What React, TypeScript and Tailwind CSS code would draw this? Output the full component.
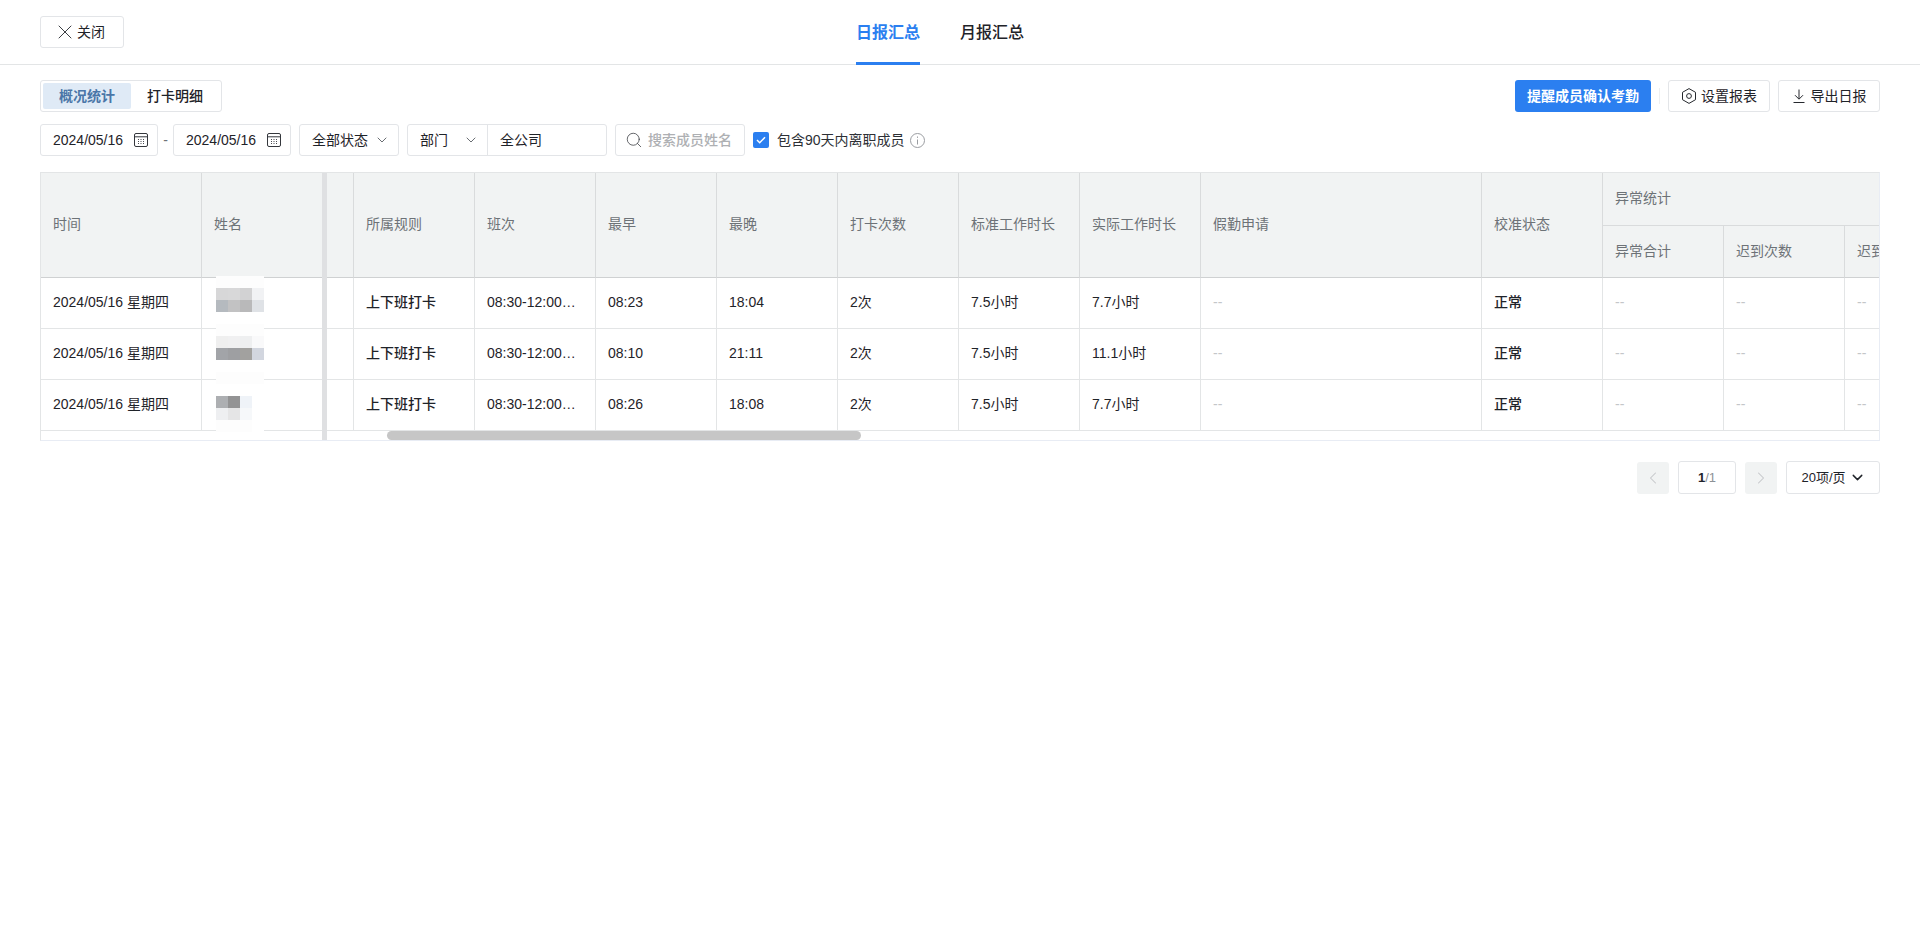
import { ChevronDown, ChevronLeft, ChevronRight, Search, X } from "lucide-react";

const FONT = "font-['Liberation_Sans','Noto_Sans_CJK_SC',sans-serif]";
const box = "flex h-8 items-center rounded-[3px] border border-[#e3e5e8] bg-white";

function CalendarIcon() {
  return (
    <svg width="16" height="16" viewBox="0 0 16 16" fill="none" stroke="#34373c" strokeWidth="1">
      <rect x="1.5" y="1.5" width="13" height="13" rx="1.5" />
      <path d="M1.5 4.8h13" />
      <path d="M5 7.5h1M7.5 7.5h1M10 7.5h1M5 9.5h1M7.5 9.5h1M10 9.5h1M5 11.5h1M7.5 11.5h1M10 11.5h1" strokeWidth="0.9" />
    </svg>
  );
}

function HexIcon() {
  return (
    <svg width="16" height="16" viewBox="0 0 16 16" fill="none" stroke="#26292e" strokeWidth="1">
      <path d="M8 .6l6.5 3.7v7.4L8 15.4l-6.5-3.7V4.3z" />
      <circle cx="8" cy="8" r="2.4" />
    </svg>
  );
}

function DownloadIcon() {
  return (
    <svg width="14" height="14" viewBox="0 0 14 14" fill="none" stroke="#26292e" strokeWidth="1">
      <path d="M7 .5v9.5M3 6.2L7 10.2l4-4M1.5 13.5h11" />
    </svg>
  );
}

function InfoIcon() {
  return (
    <svg width="15" height="15" viewBox="0 0 15 15" fill="none" stroke="#9a9da1" strokeWidth="1">
      <circle cx="7.5" cy="7.5" r="7" />
      <path d="M7.5 6.5v5M7.5 3.5v1.4" />
    </svg>
  );
}

function DateInput() {
  return (
    <div className={`${box} w-[118px] justify-between pl-3 pr-2 text-sm text-[#1f2329]`}>
      <span>2024/05/16</span>
      <CalendarIcon />
    </div>
  );
}

// name cells are pixelated in the screenshot
const mosaics = [
  {
    top: "top-[-2px]",
    rows: [
      ["bg-[#fdfdfd]", "bg-[#fdfdfd]", "bg-[#fdfdfd]", "bg-[#fdfdfd]"],
      ["bg-[#d7d7d8]", "bg-[#d8d8d9]", "bg-[#d2d2d3]", "bg-[#f1f2f4]"],
      ["bg-[#b5babf]", "bg-[#c2c2c3]", "bg-[#b9b9ba]", "bg-[#dfe2e6]"],
    ],
  },
  {
    top: "top-[-5px]",
    rows: [
      ["bg-[#fdfdfd]", "bg-[#fdfdfd]", "bg-[#fdfdfd]", "bg-[#fdfdfd]"],
      ["bg-[#efefef]", "bg-[#f0f0f1]", "bg-[#eeeff0]", "bg-[#f9f9fa]"],
      ["bg-[#a2a4a8]", "bg-[#9e9fa2]", "bg-[#a2a19f]", "bg-[#d2d6df]"],
    ],
  },
  {
    top: "top-[-8px]",
    rows: [
      ["bg-[#fdfdfd]", "bg-[#fdfdfd]", "bg-[#fdfdfd]", "bg-[#fdfdfd]"],
      ["bg-white", "bg-white", "bg-white", "bg-white"],
      ["bg-[#adafb2]", "bg-[#939394]", "bg-[#eff3f8]", "bg-white"],
      ["bg-[#eeeff1]", "bg-[#e5e5e6]", "bg-[#f6f8fa]", "bg-white"],
      ["bg-[#fdfdfd]", "bg-[#fdfdfd]", "bg-[#fdfdfd]", "bg-white"],
    ],
  },
];

const rows = [
  { late: "18:04", early: "08:23", real: "7.7小时" },
  { late: "21:11", early: "08:10", real: "11.1小时" },
  { late: "18:08", early: "08:26", real: "7.7小时" },
];

const headCell = "overflow-hidden whitespace-nowrap border-r border-b border-[#d9dbdc] bg-[#f1f3f3] px-3 pb-[2px] text-left text-sm font-normal text-[#6d7277]";
const bodyCell = "h-[51px] truncate border-r border-b border-[#e3e5e6] bg-white px-3 pb-[2px] text-sm text-[#1f2329]";
const emptyCell = "h-[51px] border-r border-b border-[#e3e5e6] bg-white px-3 pb-[2px] text-sm text-[#c4c6c9]";

function ReportTable() {
  return (
    <div className="relative mx-10 mt-4 w-[1840px] overflow-hidden border-t border-r border-b border-l border-t-[#e3e5e6] border-r-[#e8ecf4] border-b-[#e8ecf4] border-l-[#e3e5e6] pb-[9px]">
      <table className="w-[1925px] table-fixed border-separate border-spacing-0">
        <colgroup>
          <col className="w-[161px]" />
          <col className="w-[152px]" />
          <col className="w-[121px]" />
          <col className="w-[121px]" />
          <col className="w-[121px]" />
          <col className="w-[121px]" />
          <col className="w-[121px]" />
          <col className="w-[121px]" />
          <col className="w-[121px]" />
          <col className="w-[281px]" />
          <col className="w-[121px]" />
          <col className="w-[121px]" />
          <col className="w-[121px]" />
          <col className="w-[121px]" />
        </colgroup>
        <thead>
          <tr className="h-[53px]">
            {["时间", "姓名", "所属规则", "班次", "最早", "最晚", "打卡次数", "标准工作时长", "实际工作时长", "假勤申请", "校准状态"].map((t) => (
              <th key={t} rowSpan={2} className={`${headCell} border-b-[#cfd1d2]`}>
                {t}
              </th>
            ))}
            <th colSpan={3} className={headCell}>
              异常统计
            </th>
          </tr>
          <tr className="h-[52px]">
            <th className={`${headCell} border-b-[#cfd1d2]`}>异常合计</th>
            <th className={`${headCell} border-b-[#cfd1d2]`}>迟到次数</th>
            <th className={`${headCell} border-b-[#cfd1d2]`}>迟到时长</th>
          </tr>
        </thead>
        <tbody>
          {rows.map((r, i) => (
            <tr key={i}>
              <td className={bodyCell}>2024/05/16 星期四</td>
              <td className={`${bodyCell} relative overflow-visible`}>
                <div className={`absolute left-[14px] z-10 ${mosaics[i].top}`}>
                  {mosaics[i].rows.map((line, j) => (
                    <div key={j} className="flex">
                      {line.map((c, k) => (
                        <div key={k} className={`h-3 w-3 ${c}`} />
                      ))}
                    </div>
                  ))}
                </div>
              </td>
              <td className={`${bodyCell} font-medium`}>上下班打卡</td>
              <td className={`${bodyCell} pr-4`}>08:30-12:00 13:30-18:00</td>
              <td className={bodyCell}>{r.early}</td>
              <td className={bodyCell}>{r.late}</td>
              <td className={bodyCell}>2次</td>
              <td className={bodyCell}>7.5小时</td>
              <td className={bodyCell}>{r.real}</td>
              <td className={emptyCell}>--</td>
              <td className={`${bodyCell} font-medium`}>正常</td>
              <td className={emptyCell}>--</td>
              <td className={emptyCell}>--</td>
              <td className={emptyCell}>--</td>
            </tr>
          ))}
        </tbody>
      </table>
      {/* end of the frozen columns */}
      <div className="absolute top-0 bottom-0 left-[281px] z-20 w-[5px] bg-[#dfe0e2]" />
      {/* horizontal scrollbar */}
      <div className="absolute bottom-0 left-[346px] z-20 h-[9px] w-[474px] rounded-full bg-[#c6c6c6]" />
    </div>
  );
}

export default function App() {
  return (
    <div className={`min-h-[931px] bg-white ${FONT}`}>
      <header className="flex h-[65px] items-start border-b border-[#e3e5e6] px-10">
        <button className={`${box} mt-4 w-[84px] pl-[12px] text-sm text-[#1f2329]`}>
          <X size={24} strokeWidth={1} className="text-[#3a3d42]" />
          关闭
        </button>
        <nav className="ml-[732px] flex h-16 gap-10 pt-[2px] text-base">
          <div className="relative flex items-center font-bold text-[#2b7ff0]">
            日报汇总
            <span className="absolute right-0 -bottom-px left-0 h-[3px] bg-[#2b7ff0]" />
          </div>
          <div className="flex items-center font-medium text-[#1f2329]">月报汇总</div>
        </nav>
      </header>

      <div className="mt-[15px] flex items-start justify-between px-10">
        <div className={`${box} w-[182px] gap-0 px-[2px] text-sm`}>
          <div className="flex h-[26px] w-[88px] items-center justify-center rounded-[2px] bg-[#dfeaf6] font-bold text-[#4a76a8]">
            概况统计
          </div>
          <div className="flex flex-1 items-center justify-center font-medium text-[#1f2329]">打卡明细</div>
        </div>
        <div className="flex items-center text-sm">
          <button className="h-8 w-[136px] rounded-[3px] bg-[#2b7ff0] font-bold text-white">提醒成员确认考勤</button>
          <span className="mx-2 h-4 w-px bg-[#eeeff0]" />
          <button className={`${box} w-[102px] justify-center gap-1 text-[#1f2329]`}>
            <HexIcon />
            设置报表
          </button>
          <button className={`${box} ml-2 w-[102px] justify-center gap-[5px] text-[#1f2329]`}>
            <DownloadIcon />
            导出日报
          </button>
        </div>
      </div>

      <div className="mt-3 flex items-center px-10 text-sm text-[#1f2329]">
        <DateInput />
        <span className="w-[15px] text-center text-[#6d7277]">-</span>
        <DateInput />
        <div className={`${box} ml-2 w-[100px] justify-between pl-3 pr-2`}>
          <span>全部状态</span>
          <ChevronDown size={16} strokeWidth={1.25} className="text-[#4b4f55]" />
        </div>
        <div className={`${box} ml-2 w-[200px]`}>
          <div className="flex h-full w-[80px] items-center justify-between border-r border-[#e3e5e8] pl-3 pr-2">
            <span>部门</span>
            <ChevronDown size={16} strokeWidth={1.25} className="text-[#4b4f55]" />
          </div>
          <span className="pl-3">全公司</span>
        </div>
        <div className={`${box} ml-2 w-[130px] gap-[5px] pl-[9px] font-medium text-[#aeb0b3]`}>
          <Search size={18} strokeWidth={1} className="text-[#34373c]" />
          搜索成员姓名
        </div>
        <div className="ml-2 flex h-4 w-4 items-center justify-center rounded-[2px] bg-[#2b7ff0]">
          <svg width="10" height="8" viewBox="0 0 10 8" fill="none" stroke="white" strokeWidth="1.5">
            <path d="M1 4l2.7 2.7L9 1.2" />
          </svg>
        </div>
        <span className="ml-2 mr-[5px] text-[#2d3035]">包含90天内离职成员</span>
        <InfoIcon />
      </div>

      <ReportTable />

      <div className="mt-5 flex items-center justify-end gap-[9px] px-10 text-[13px]">
        <div className="flex h-8 w-8 items-center justify-center rounded-[3px] bg-[#f1f3f3] text-[#c4c6c9]">
          <ChevronLeft size={20} strokeWidth={1.25} />
        </div>
        <div className={`${box} h-[33px] w-[58px] justify-center`}>
          <span className="font-bold text-[#1f2329]">1</span>
          <span className="text-[#8d9196]">/1</span>
        </div>
        <div className="flex h-8 w-8 items-center justify-center rounded-[3px] bg-[#f1f3f3] text-[#c4c6c9]">
          <ChevronRight size={20} strokeWidth={1.25} />
        </div>
        <div className={`${box} h-[33px] w-[94px] justify-center gap-[3px] pl-px text-[#1f2329]`}>
          20项/页
          <ChevronDown size={17} strokeWidth={2} />
        </div>
      </div>
    </div>
  );
}
